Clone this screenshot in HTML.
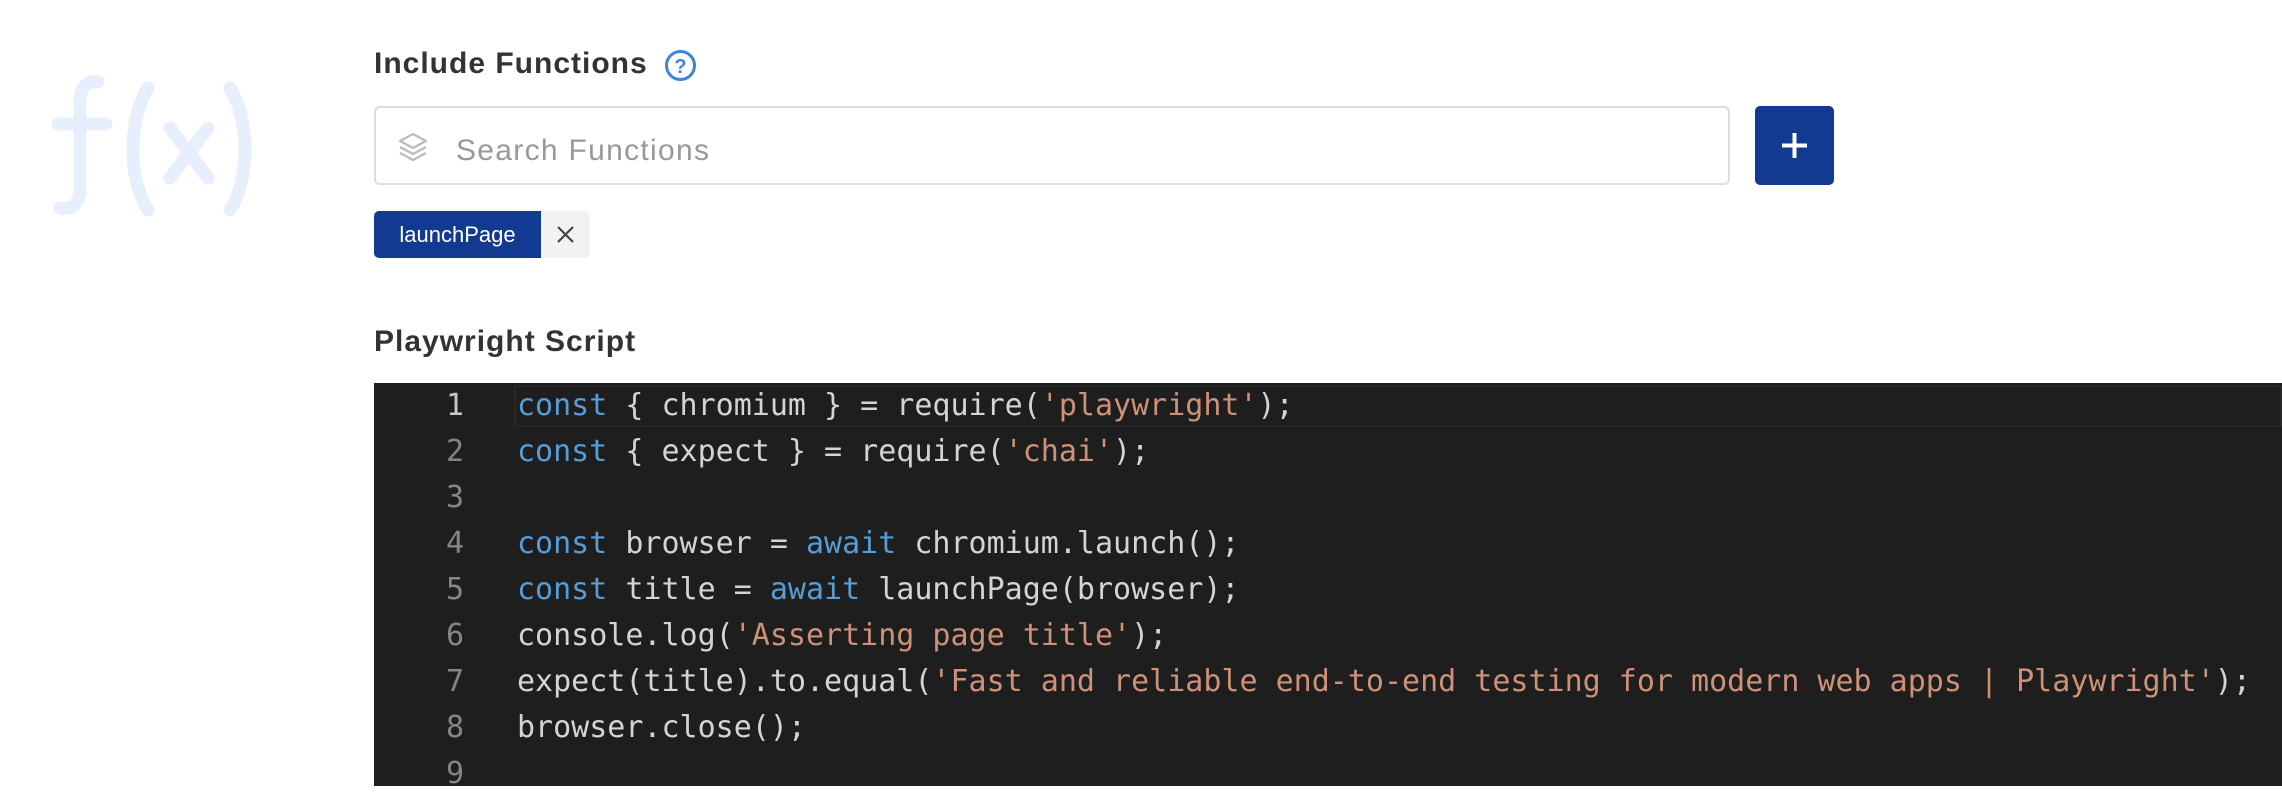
<!DOCTYPE html>
<html><head><meta charset="utf-8"><style>
body{margin:0;width:2282px;height:786px;background:#fff;overflow:hidden;position:relative;font-family:"Liberation Sans",sans-serif}
.lbl{position:absolute;left:374px;font-weight:bold;font-size:30px;letter-spacing:1px;color:#333}
.inp{position:absolute;left:374px;top:106px;width:1352px;height:75px;border:2px solid #ddd;border-radius:6px}
.inp span{position:absolute;left:80px;top:26px;font-size:30px;letter-spacing:1.3px;color:#999}
.btn{position:absolute;left:1755px;top:106px;width:79px;height:79px;background:#123a91;border-radius:5px}
.chip{position:absolute;left:374px;top:211px;width:167px;height:47px;background:#123a91;border-radius:5px 0 0 5px;color:#fff;font-size:22px;line-height:47px;text-align:center}
.chipx{position:absolute;left:541px;top:211px;width:49px;height:47px;background:#f2f2f2;border-radius:0 5px 5px 0}
.ed{position:absolute;left:374px;top:383px;right:0;bottom:0;background:#1e1e1e}
.ln{position:absolute;left:0;width:90px;text-align:right;color:#858585}
.cd{position:absolute;left:143px;color:#d4d4d4;white-space:pre}
.ed div{font-family:"DejaVu Sans Mono","Liberation Mono",monospace;font-size:30px;height:46px;line-height:46px}
.k{color:#569cd6}.s{color:#ce9178}
.hl{position:absolute;left:140px;right:0;top:2px;height:40px;border:2px solid #282828}
</style></head><body>
<svg style="position:absolute;left:48px;top:70px" width="212" height="150" viewBox="0 0 212 150" fill="none" stroke="#e8effc" stroke-width="13" stroke-linecap="round">
<path d="M50 12 C38 10 32 18 32 32 L32 118 C32 134 24 140 12 138"/>
<path d="M10 54 H58"/>
<path d="M100 18 C80 50 80 110 100 140"/>
<path d="M122 58 L160 108 M160 58 L122 108"/>
<path d="M182 18 C202 50 202 110 182 140"/>
</svg>
<div class="lbl" style="top:47px">Include Functions</div>
<svg style="position:absolute;left:664px;top:49px" width="33" height="33" viewBox="0 0 33 33"><circle cx="16.5" cy="16.5" r="14" fill="none" stroke="#3b86d6" stroke-width="3"/><text x="16.5" y="24" text-anchor="middle" font-family="Liberation Sans" font-weight="bold" font-size="20" fill="#3b86d6">?</text></svg>
<div class="inp"><svg style="position:absolute;left:20px;top:22px" width="34" height="34" viewBox="0 0 34 34" fill="none" stroke="#bbb" stroke-width="2.2" stroke-linejoin="round"><path d="M17 4 L30 11 L17 18 L4 11 Z"/><path d="M4 17 L17 24 L30 17"/><path d="M4 23 L17 30 L30 23"/></svg><span>Search Functions</span></div>
<div class="btn"><svg width="79" height="79"><path d="M39.5 27 V52 M27 39.5 H52" stroke="#fff" stroke-width="4"/></svg></div>
<div class="chip">launchPage</div>
<div class="chipx"><svg width="49" height="47"><path d="M17 16 L32 31 M32 16 L17 31" stroke="#444" stroke-width="2.2"/></svg></div>
<div class="lbl" style="top:325px">Playwright Script</div>
<div class="ed">
<div class="hl" style="height:38px"></div>
<div class="ln" style="top:0;color:#c6c6c6">1</div><div class="cd" style="top:0"><span class="k">const</span> { chromium } = require(<span class="s">'playwright'</span>);</div>
<div class="ln" style="top:46px">2</div><div class="cd" style="top:46px"><span class="k">const</span> { expect } = require(<span class="s">'chai'</span>);</div>
<div class="ln" style="top:92px">3</div>
<div class="ln" style="top:138px">4</div><div class="cd" style="top:138px"><span class="k">const</span> browser = <span class="k">await</span> chromium.launch();</div>
<div class="ln" style="top:184px">5</div><div class="cd" style="top:184px"><span class="k">const</span> title = <span class="k">await</span> launchPage(browser);</div>
<div class="ln" style="top:230px">6</div><div class="cd" style="top:230px">console.log(<span class="s">'Asserting page title'</span>);</div>
<div class="ln" style="top:276px">7</div><div class="cd" style="top:276px">expect(title).to.equal(<span class="s">'Fast and reliable end-to-end testing for modern web apps | Playwright'</span>);</div>
<div class="ln" style="top:322px">8</div><div class="cd" style="top:322px">browser.close();</div>
<div class="ln" style="top:368px">9</div>
</div>
</body></html>
